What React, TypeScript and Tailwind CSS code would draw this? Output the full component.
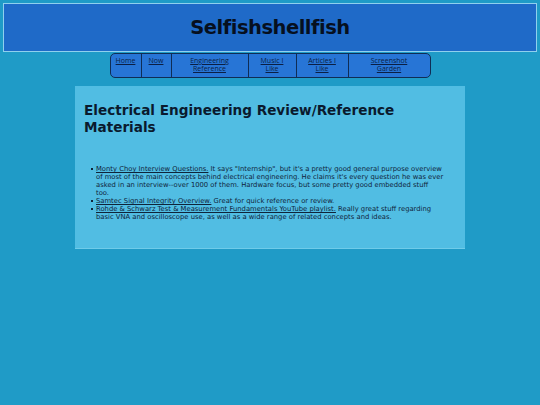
import React from 'react';

const navItems = [
  { label: ['Home'], w: 'w-[31px]' },
  { label: ['Now'], w: 'w-[30px]' },
  { label: ['Engineering', 'Reference'], w: 'w-[77px]' },
  { label: ['Music I', 'Like'], w: 'w-[48px]' },
  { label: ['Articles I', 'Like'], w: 'w-[52px]' },
  { label: ['Screenshot', 'Garden'], w: 'flex-1' },
];

const Bullet = ({ children }: { children: React.ReactNode }) => (
  <li className="flex gap-[3px]">
    <span className="mt-[3px] h-[2px] w-[2px] shrink-0 bg-[#10243a]" />
    <span>{children}</span>
  </li>
);

const App = () => {
  return (
    <div className="min-h-[405px] bg-[#1f9bc7] pt-[3px] font-['DejaVu_Sans',sans-serif] text-black">
      <header className="mx-[3px] h-[49px] border border-[#8fd0ee] bg-[#1f6ac8] flex items-center justify-center">
        <h1 className="text-[19.5px] font-bold text-[#06101f] tracking-tight">Selfishshellfish</h1>
      </header>
      <nav className="mx-auto mt-[1px] flex w-[321px] h-[25px] rounded-[5px] border-[1.5px] border-[#0f2d55] bg-[#2775d6] overflow-hidden">
        {navItems.map((item, i) => (
          <a
            key={i}
            href="#"
            className={`${item.w} flex flex-col items-center pt-[3px] text-[7px] leading-[8px] text-[#0b1f44] underline font-['Open_Sans',sans-serif] ${i < navItems.length - 1 ? 'border-r border-[#0f2d55]' : ''}`}
          >
            {item.label.map((l) => (
              <span key={l}>{l}</span>
            ))}
          </a>
        ))}
      </nav>
      <main className="mx-auto mt-[8px] w-[390px] h-[163px] bg-[#51bde3] border-b border-[#6fcbe9] px-[9px] pt-[16px]">
        <h2 className="text-[13.6px] font-bold leading-[17px] text-[#0a1a2e]">
          Electrical Engineering Review/Reference Materials
        </h2>
        <ul className="mt-[29px] pl-[7px] pr-[12px] text-[6.8px] leading-[8px] text-[#10243a]">
          <Bullet>
            <a href="#" className="underline">Monty Choy Interview Questions.</a> It says "Internship", but it's a pretty good general purpose overview of most of the main concepts behind electrical engineering. He claims it's every question he was ever asked in an interview--over 1000 of them. Hardware focus, but some pretty good embedded stuff
            <br />
            too.
          </Bullet>
          <Bullet>
            <a href="#" className="underline">Samtec Signal Integrity Overview.</a> Great for quick reference or review.
          </Bullet>
          <Bullet>
            <a href="#" className="underline">Rohde &amp; Schwarz Test &amp; Measurement Fundamentals YouTube playlist.</a> Really great stuff regarding basic VNA and oscilloscope use, as well as a wide range of related concepts and ideas.
          </Bullet>
        </ul>
      </main>
    </div>
  );
};

export default App;
